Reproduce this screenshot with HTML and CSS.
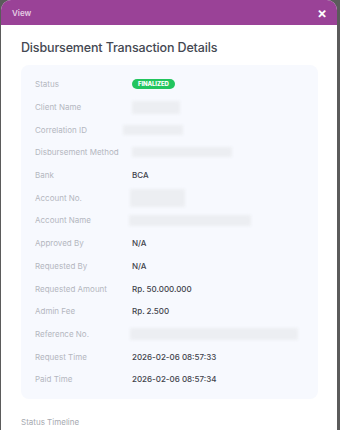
FILE: index.html
```html
<!DOCTYPE html>
<html lang="en">
<head>
    <meta charset="UTF-8">
    <meta name="viewport" content="width=device-width, initial-scale=1.0">
    <title>View</title>
    <link rel="stylesheet" href="styles.css">
</head>
<body>

<div class="modal">
    <div class="modal-header">
        <span class="modal-title">View</span>
        <span class="modal-close">&times;</span>
    </div>
    <div class="modal-body">
        <h2 class="section-title">Disbursement Transaction Details</h2>
        <div class="detail-card">
            <div class="row">
                <span class="label">Status</span>
                <span class="value"><span class="badge">FINALIZED</span></span>
            </div>
            <div class="row">
                <span class="label">Client Name</span>
                <span class="value"><span class="hidden-val client"></span></span>
            </div>
            <div class="row">
                <span class="label">Correlation ID</span>
                <span class="value"><span class="hidden-val correlation"></span></span>
            </div>
            <div class="row">
                <span class="label">Disbursement Method</span>
                <span class="value"><span class="hidden-val method"></span></span>
            </div>
            <div class="row">
                <span class="label">Bank</span>
                <span class="value">BCA</span>
            </div>
            <div class="row">
                <span class="label">Account No.</span>
                <span class="value"><span class="hidden-val account-no"></span></span>
            </div>
            <div class="row">
                <span class="label">Account Name</span>
                <span class="value"><span class="hidden-val account-name"></span></span>
            </div>
            <div class="row">
                <span class="label">Approved By</span>
                <span class="value">N/A</span>
            </div>
            <div class="row">
                <span class="label">Requested By</span>
                <span class="value">N/A</span>
            </div>
            <div class="row">
                <span class="label">Requested Amount</span>
                <span class="value">Rp. 50.000.000</span>
            </div>
            <div class="row">
                <span class="label">Admin Fee</span>
                <span class="value">Rp. 2.500</span>
            </div>
            <div class="row">
                <span class="label">Reference No.</span>
                <span class="value"><span class="hidden-val reference"></span></span>
            </div>
            <div class="row">
                <span class="label">Request Time</span>
                <span class="value">2026-02-06 08:57:33</span>
            </div>
            <div class="row">
                <span class="label">Paid Time</span>
                <span class="value">2026-02-06 08:57:34</span>
            </div>
        </div>
        <div class="timeline-title">Status Timeline</div>
    </div>
</div>

</body>
</html>
```

FILE: styles.css
```css
body {
    font-family: Inter, "Open Sans", sans-serif;
    background-color: #5b5b5b;
    margin: 0;
    padding: 0;
    height: 430px;
    overflow: hidden;
}

.modal {
    margin-left: 1px;
    width: 336px;
    height: 440px;
    background-color: #fff;
    border-radius: 10px 10px 0 0;
    overflow: hidden;
}

.modal-header {
    height: 25px;
    background-color: #9a4297;
    display: flex;
    align-items: center;
    justify-content: space-between;
    padding: 0 10px 0 11px;
}

.modal-title {
    color: #e6cfe5;
    font-size: 8px;
    font-weight: 600;
}

.modal-close {
    color: #fff;
    font-size: 15px;
    font-weight: 600;
    line-height: 1;
}

.modal-body {
    padding: 15px 19px 0 20px;
}

.section-title {
    margin: 0 0 10px 0;
    font-size: 12.5px;
    font-weight: 500;
    color: #444852;
    letter-spacing: -0.15px;
}

.detail-card {
    background-color: #f7f9fe;
    border-radius: 8px;
    padding: 8px 14px 8px 14px;
}

.row {
    display: flex;
    align-items: center;
    height: 22.7px;
}

.label {
    width: 97px;
    flex-shrink: 0;
    font-size: 8px;
    color: #b4b7bf;
}

.value {
    font-size: 8px;
    font-weight: 500;
    color: #3f434c;
    display: flex;
    align-items: center;
}

.badge {
    background-color: #22c55e;
    color: #fff;
    font-size: 6px;
    font-weight: 800;
    padding: 2px 6px;
    border-radius: 6px;
    line-height: 6px;
    letter-spacing: -0.1px;
}

.hidden-val {
    display: block;
    background-color: #eceef2;
    filter: blur(1.5px);
    border-radius: 2px;
}

.client {
    width: 48px;
    height: 13px;
}

.correlation {
    width: 60px;
    height: 10px;
    margin-left: -9px;
}

.method {
    width: 100px;
    height: 10px;
}

.account-no {
    width: 55px;
    height: 18px;
    margin-left: -2px;
}

.account-name {
    width: 122px;
    height: 11px;
    margin-left: -3px;
}

.reference {
    width: 168px;
    height: 12px;
    margin-left: -2px;
}

.timeline-title {
    margin-top: 18px;
    font-size: 8px;
    color: #a6a9b0;
}
```
